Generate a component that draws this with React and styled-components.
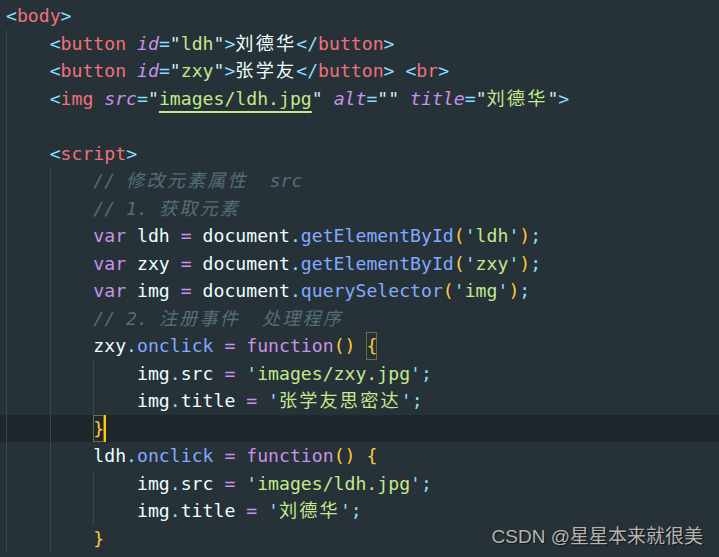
import React from "react";
import styled, { createGlobalStyle } from "styled-components";

const Global = createGlobalStyle`
  html, body { margin: 0; padding: 0; background: #263238; }
  body { overflow: hidden; }
`;

const palette = {
  tp: "#89ddff",
  tag: "#f07178",
  attr: "#c792ea",
  str: "#c3e88d",
  q: "#d3ecf4",
  text: "#eeffff",
  kw: "#c792ea",
  op: "#c792ea",
  punc: "#89ddff",
  fn: "#82aaff",
  paren: "#ffcb3d",
  com: "#546e7a",
};

const Editor = styled.div`
  position: relative;
  width: 719px;
  height: 557px;
  box-sizing: border-box;
  padding: 2px 0 0 6px;
  background: #263238;
  font-family: "DejaVu Sans Mono", "Noto Sans CJK SC", monospace;
  font-size: 18.15px;
  color: #eeffff;
  overflow: hidden;
`;

const Line = styled.div`
  display: flex;
  height: 27.5px;
  line-height: 27.5px;
  margin-left: -6px;
  padding-left: 6px;
  white-space: pre;
  background: ${(p) => (p.$active ? "#1e272c" : "transparent")};
`;

const Indent = styled.span`
  display: inline-block;
  flex: none;
  width: 4ch;
  height: 100%;
  box-sizing: border-box;
  border-left: 1px solid #37474f;
`;

const Code = styled.span`
  display: inline-block;
  white-space: pre;
`;

const Tok = styled.span`
  color: ${(p) => palette[p.$kind]};
  font-style: ${(p) => (p.$kind === "attr" || p.$kind === "com" ? "italic" : "normal")};
  ${(p) =>
    p.$link &&
    `text-decoration: underline;
     text-decoration-color: #c3e88d;
     text-decoration-thickness: 2px;
     text-underline-offset: 6px;`}
  ${(p) =>
    p.$match &&
    `display: inline-block;
     box-shadow: inset 0 0 0 1px #6f6b3b;`}
`;

const Cjk = styled.span`
  letter-spacing: 2.15px;
`;

const Cursor = styled.span`
  display: inline-block;
  width: 2px;
  height: 27.5px;
  vertical-align: top;
  background: #ffcc00;
`;

const Watermark = styled.div`
  position: absolute;
  right: 16px;
  bottom: 9px;
  font-family: "Liberation Sans", "Noto Sans CJK SC", sans-serif;
  font-size: 19px;
  line-height: 22px;
  color: #b4b4b4;
  text-shadow: 1px 1px 1px #111;
  white-space: nowrap;
`;

const withCjk = (text) =>
  text.split(/([\u4e00-\u9fff]+)/).map((part, i) =>
    /[\u4e00-\u9fff]/.test(part) ? <Cjk key={i}>{part}</Cjk> : part
  );

const sp = ["text", " "];
const tag = (name) => [["tp", "<"], ["tag", name]];
const close = (name) => [["tp", "</"], ["tag", name], ["tp", ">"]];
const attr = (name, val, extra) => [
  ["attr", name],
  ["tp", "="],
  ["q", '"'],
  ["str", val, extra],
  ["q", '"'],
];
const jsStr = (v) => [["punc", "'"], ["str", v], ["punc", "'"]];

const lines = [
  { level: 0, t: [...tag("body"), ["tp", ">"]] },
  {
    level: 1,
    t: [...tag("button"), sp, ...attr("id", "ldh"), ["tp", ">"], ["text", "刘德华"], ...close("button")],
  },
  {
    level: 1,
    t: [
      ...tag("button"), sp, ...attr("id", "zxy"), ["tp", ">"], ["text", "张学友"], ...close("button"),
      sp, ["tp", "<"], ["tag", "br"], ["tp", ">"],
    ],
  },
  {
    level: 1,
    t: [
      ...tag("img"), sp, ...attr("src", "images/ldh.jpg", { link: true }), sp,
      ...attr("alt", ""), sp, ...attr("title", "刘德华"), ["tp", ">"],
    ],
  },
  { level: 1, t: [] },
  { level: 1, t: [...tag("script"), ["tp", ">"]] },
  { level: 2, t: [["com", "// 修改元素属性  src"]] },
  { level: 2, t: [["com", "// 1. 获取元素"]] },
  {
    level: 2,
    t: [["kw", "var"], sp, ["text", "ldh"], sp, ["op", "="], sp, ["text", "document"], ["punc", "."],
      ["fn", "getElementById"], ["paren", "("], ...jsStr("ldh"), ["paren", ")"], ["punc", ";"]],
  },
  {
    level: 2,
    t: [["kw", "var"], sp, ["text", "zxy"], sp, ["op", "="], sp, ["text", "document"], ["punc", "."],
      ["fn", "getElementById"], ["paren", "("], ...jsStr("zxy"), ["paren", ")"], ["punc", ";"]],
  },
  {
    level: 2,
    t: [["kw", "var"], sp, ["text", "img"], sp, ["op", "="], sp, ["text", "document"], ["punc", "."],
      ["fn", "querySelector"], ["paren", "("], ...jsStr("img"), ["paren", ")"], ["punc", ";"]],
  },
  { level: 2, t: [["com", "// 2. 注册事件  处理程序"]] },
  {
    level: 2,
    t: [["text", "zxy"], ["punc", "."], ["fn", "onclick"], sp, ["op", "="], sp, ["kw", "function"],
      ["paren", "()"], sp, ["paren", "{", { match: true }]],
  },
  {
    level: 3,
    t: [["text", "img"], ["punc", "."], ["text", "src"], sp, ["op", "="], sp, ...jsStr("images/zxy.jpg"), ["punc", ";"]],
  },
  {
    level: 3,
    t: [["text", "img"], ["punc", "."], ["text", "title"], sp, ["op", "="], sp, ...jsStr("张学友思密达"), ["punc", ";"]],
  },
  { level: 2, active: true, cursor: true, t: [["paren", "}", { match: true }]] },
  {
    level: 2,
    t: [["text", "ldh"], ["punc", "."], ["fn", "onclick"], sp, ["op", "="], sp, ["kw", "function"],
      ["paren", "()"], sp, ["paren", "{"]],
  },
  {
    level: 3,
    t: [["text", "img"], ["punc", "."], ["text", "src"], sp, ["op", "="], sp, ...jsStr("images/ldh.jpg"), ["punc", ";"]],
  },
  {
    level: 3,
    t: [["text", "img"], ["punc", "."], ["text", "title"], sp, ["op", "="], sp, ...jsStr("刘德华"), ["punc", ";"]],
  },
  { level: 2, t: [["paren", "}"]] },
];

export default function App() {
  return (
    <>
      <Global />
      <Editor>
        {lines.map((ln, i) => (
          <Line key={i} $active={ln.active}>
            {Array.from({ length: ln.level }).map((_, k) => (
              <Indent key={k} />
            ))}
            <Code>
              {ln.t.map(([kind, text, opts], k) => (
                <Tok key={k} $kind={kind} $link={opts?.link} $match={opts?.match}>
                  {withCjk(text)}
                </Tok>
              ))}
              {ln.cursor && <Cursor />}
            </Code>
          </Line>
        ))}
        <Watermark>CSDN @星星本来就很美</Watermark>
      </Editor>
    </>
  );
}
